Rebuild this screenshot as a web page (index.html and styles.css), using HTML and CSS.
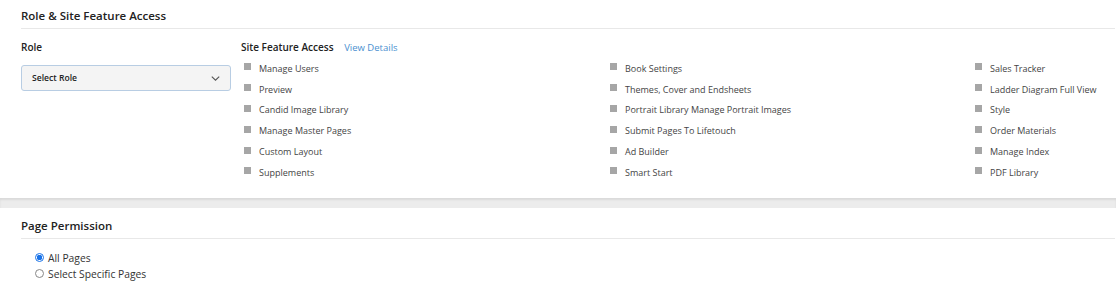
FILE: index.html
```html
<!DOCTYPE html>
<html>
<head>
<meta charset="utf-8">
<link rel="stylesheet" href="styles.css">
</head>
<body>
<div class="page">
  <section class="section first">
    <div class="section-title">Role &amp; Site Feature Access</div>
    <div class="content">
      <div class="role-col">
        <div class="label">Role</div>
        <div class="select">
          <span>Select Role</span>
          <svg class="chev" width="9" height="5" viewBox="0 0 9 5"><path d="M0.8 0.6 L4.5 4.2 L8.2 0.6" fill="none" stroke="#555" stroke-width="1.1"/></svg>
        </div>
      </div>
      <div class="features">
        <div class="label">Site Feature Access <a class="link">View Details</a></div>
        <div class="grid">
          <div class="col">
            <div class="item"><span class="box"></span>Manage Users</div>
            <div class="item"><span class="box"></span>Preview</div>
            <div class="item"><span class="box"></span>Candid Image Library</div>
            <div class="item"><span class="box"></span>Manage Master Pages</div>
            <div class="item"><span class="box"></span>Custom Layout</div>
            <div class="item"><span class="box"></span>Supplements</div>
          </div>
          <div class="col">
            <div class="item"><span class="box"></span>Book Settings</div>
            <div class="item"><span class="box"></span>Themes, Cover and Endsheets</div>
            <div class="item"><span class="box"></span>Portrait Library Manage Portrait Images</div>
            <div class="item"><span class="box"></span>Submit Pages To Lifetouch</div>
            <div class="item"><span class="box"></span>Ad Builder</div>
            <div class="item"><span class="box"></span>Smart Start</div>
          </div>
          <div class="col">
            <div class="item"><span class="box"></span>Sales Tracker</div>
            <div class="item"><span class="box"></span>Ladder Diagram Full View</div>
            <div class="item"><span class="box"></span>Style</div>
            <div class="item"><span class="box"></span>Order Materials</div>
            <div class="item"><span class="box"></span>Manage Index</div>
            <div class="item"><span class="box"></span>PDF Library</div>
          </div>
        </div>
      </div>
    </div>
  </section>
  <div class="band"></div>
  <section class="section second">
    <div class="section-title">Page Permission</div>
    <div class="radios">
      <label class="radio"><span class="dot checked"></span>All Pages</label>
      <label class="radio"><span class="dot"></span>Select Specific Pages</label>
    </div>
  </section>
</div>
</body>
</html>
```

FILE: styles.css
```css
html, body {
  margin: 0;
  padding: 0;
  background: #fff;
}
body {
  font-family: "Open Sans", "Liberation Sans", sans-serif;
  color: #333;
}
.section {
  padding-left: 21px;
  padding-right: 1px;
  background: #fff;
}
.section-title {
  font-size: 11.5px;
  font-weight: 600;
  color: #222;
  line-height: 17px;
  padding: 7px 0 4px;
  border-bottom: 1px solid #e8e8e8;
}
.content {
  display: flex;
  padding-top: 11px;
  padding-bottom: 15px;
}
.role-col {
  width: 220px;
  flex: none;
}
.label {
  font-size: 10px;
  font-weight: 600;
  color: #222;
  line-height: 15px;
}
.link {
  color: #4a90d0;
  font-weight: 400;
  font-size: 9.5px;
  margin-left: 8px;
}
.select {
  margin-top: 10px;
  height: 24px;
  border: 1px solid #b8cde3;
  border-radius: 3px;
  background: #f4f4f4;
  display: flex;
  align-items: center;
  justify-content: space-between;
  padding: 0 10px 0 0;
  width: 198px;
}
.select span {
  font-size: 8.6px;
  font-weight: 600;
  color: #222;
  padding-left: 10px;
}
.features {
  flex: 1;
}
.grid {
  display: grid;
  grid-template-columns: 366px 365px auto;
  margin-top: 3px;
}
.item {
  display: flex;
  align-items: center;
  height: 20.8px;
  font-size: 9px;
  color: #444;
  margin-left: 3px;
}
.box {
  width: 7px;
  height: 7px;
  background: #a6a6a6;
  margin-right: 8px;
  margin-top: -3px;
  flex: none;
}
.band {
  height: 10px;
  background: #ececec;
  box-shadow: inset 0 2px 2px rgba(0,0,0,0.08);
}
.second .section-title {
  padding-top: 9px;
  padding-bottom: 4px;
}
.radios {
  padding: 11px 0 14px 14px;
}
.radio {
  display: flex;
  align-items: center;
  font-size: 10.3px;
  color: #333;
  line-height: 16px;
}
.dot {
  width: 9px;
  height: 9px;
  border: 1px solid #888;
  border-radius: 50%;
  margin-right: 4px;
  box-sizing: border-box;
  background: #fff;
  flex: none;
}
.dot.checked {
  border: 1px solid #1a73e8;
  background: radial-gradient(circle, #1a73e8 0 2.6px, #fff 3px);
}
```
